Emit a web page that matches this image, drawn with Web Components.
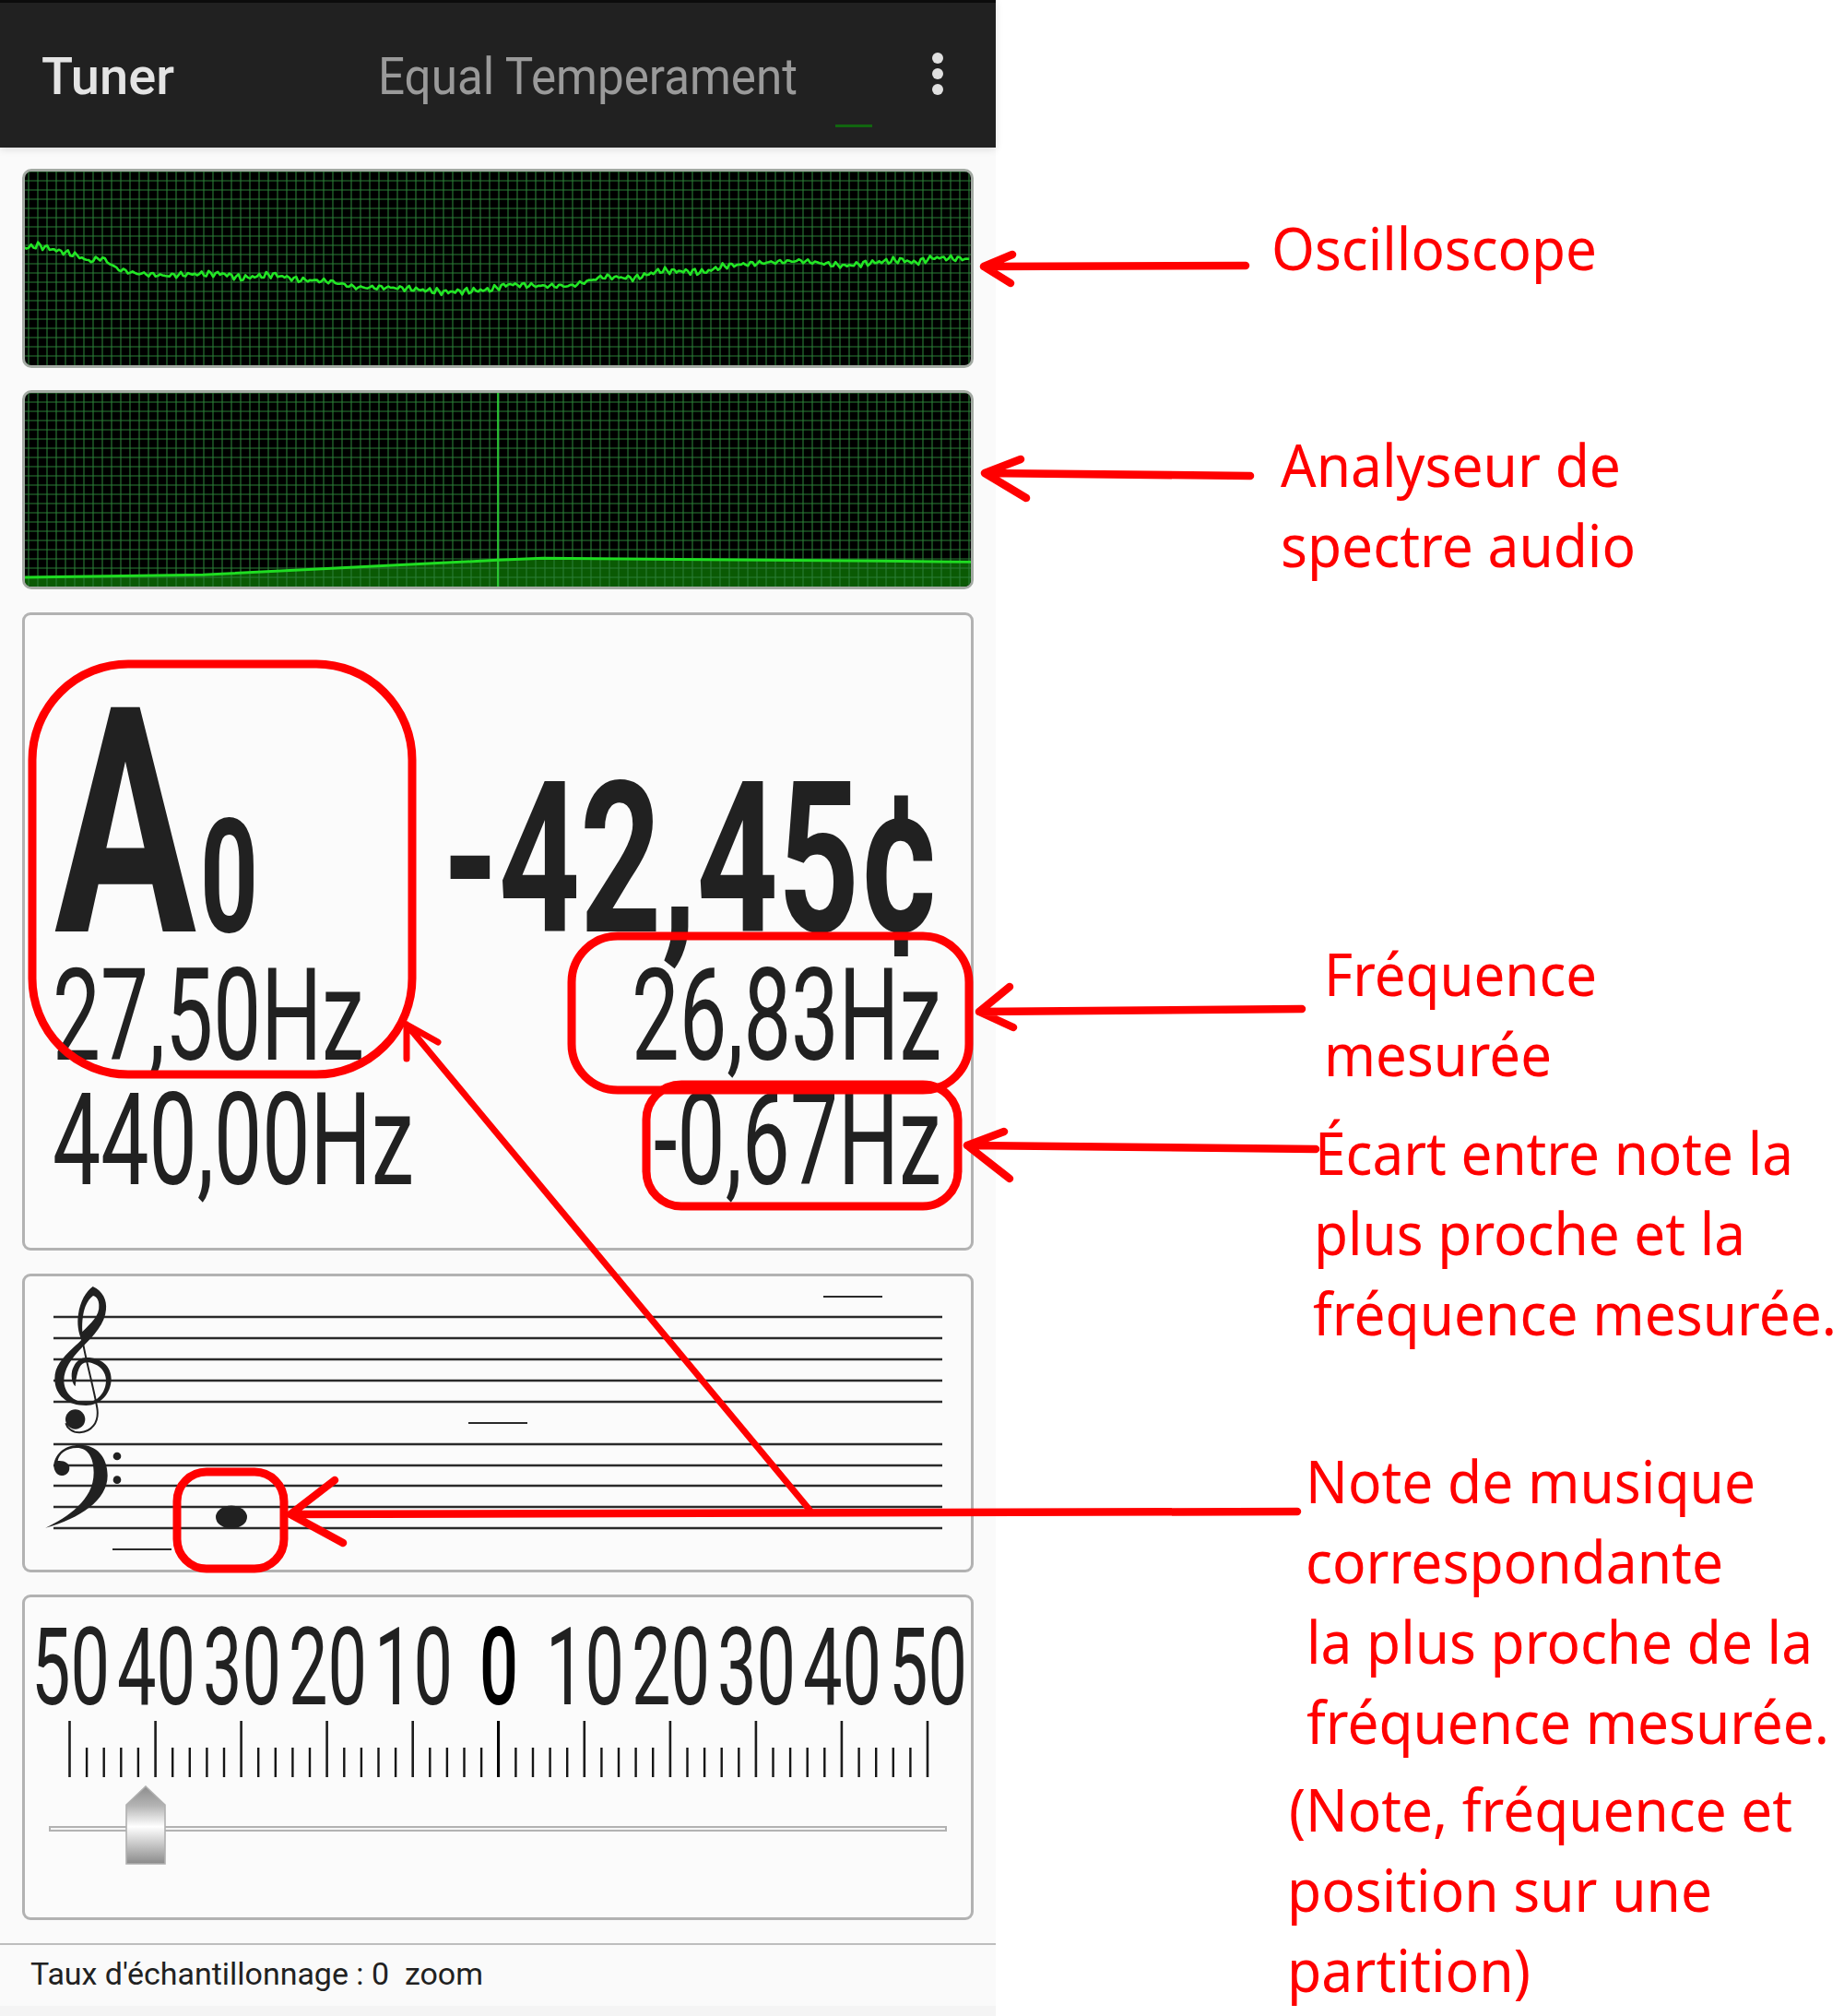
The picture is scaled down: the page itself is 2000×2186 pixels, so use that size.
<!DOCTYPE html>
<html lang="fr">
<head>
<meta charset="utf-8">
<title>Tuner</title>
<style>
  html,body{margin:0;padding:0;background:#fff}
  body{width:2000px;height:2186px;position:relative;overflow:hidden}
  #page{display:flex;align-items:flex-start}
  #notes{padding-top:225px;flex:1;min-width:0}
</style>
</head>
<body>
<div id="page">
  <tuner-app>
    <app-bar></app-bar>
    <scope-panel kind="osc"></scope-panel>
    <scope-panel kind="spec"></scope-panel>
    <note-readout></note-readout>
    <staff-panel></staff-panel>
    <cents-scale></cents-scale>
    <status-line>Taux d'échantillonnage : 0&nbsp; zoom</status-line>
  </tuner-app>
  <div id="notes">
    <red-label style="margin-left:299px"><sq-text w="353">Oscilloscope</sq-text></red-label>
    <red-label style="margin:148px 0 0 309px"><sq-text w="369">Analyseur de</sq-text></red-label>
    <red-label style="margin-left:309px"><sq-text w="385">spectre audio</sq-text></red-label>
    <red-label style="margin:378px 0 0 356px"><sq-text w="296">Fréquence</sq-text></red-label>
    <red-label style="margin-left:356px"><sq-text w="247">mesurée</sq-text></red-label>
    <red-label style="margin:20px 0 0 346px"><sq-text w="519">Écart entre note la</sq-text></red-label>
    <red-label style="margin-left:345px"><sq-text w="468">plus proche et la</sq-text></red-label>
    <red-label style="margin-left:344px"><sq-text w="568">fréquence mesurée.</sq-text></red-label>
    <red-label style="margin:95px 0 0 336px"><sq-text w="488">Note de musique</sq-text></red-label>
    <red-label style="margin-left:336px"><sq-text w="453">correspondante</sq-text></red-label>
    <red-label style="margin-left:337px"><sq-text w="549">la plus proche de la</sq-text></red-label>
    <red-label style="margin-left:337px"><sq-text w="567">fréquence mesurée.</sq-text></red-label>
    <red-label style="margin:8px 0 0 318px"><sq-text w="546">(Note, fréquence et</sq-text></red-label>
    <red-label style="margin-left:316px"><sq-text w="461">position sur une</sq-text></red-label>
    <red-label style="margin-left:316px"><sq-text w="264">partition)</sq-text></red-label>
  </div>
</div>
<red-overlay></red-overlay>

<script>
class SqText extends HTMLElement {
  constructor() {
    super();
    this.attachShadow({ mode: "open" }).innerHTML = `
      <style>:host{display:inline-block;white-space:nowrap}span{display:inline-block;transform-origin:0 0}</style>
      <span><slot></slot></span>`;
  }
  connectedCallback() {
    const w = +this.getAttribute("w");
    const s = this.shadowRoot.querySelector("span");
    const nat = s.getBoundingClientRect().width;
    s.style.transform = `scaleX(${w / nat})`;
    this.style.width = w + "px";
  }
}

const PANEL = ":host{display:block;box-sizing:border-box;width:1032px;margin-left:24px;background:#fbfbfb;border:3px solid #b2b2b2;border-radius:9px}";

class TunerApp extends HTMLElement {
  constructor() {
    super();
    this.attachShadow({ mode: "open" }).innerHTML = `
      <style>:host{display:block;width:1080px;height:2186px;background:#fafafa;font-family:Roboto,sans-serif;color:#212121}</style>
      <slot></slot>`;
  }
}

class AppBar extends HTMLElement {
  constructor() {
    super();
    this.attachShadow({ mode: "open" }).innerHTML = `
      <style>
        :host{display:flex;box-sizing:border-box;height:160px;background:#212121;border-top:3px solid #0c0c0c;font:500 56px/157px Roboto,sans-serif;color:#e4e4e4;position:relative;padding:2px 0 0 45px;box-shadow:0 2px 8px rgba(0,0,0,.12)}
        .mode{margin-left:221px;font-weight:400;color:#9a9a9a}
        .dots{display:flex;flex-direction:column;gap:5px;margin:52px 0 0 146px}
        .dots i{width:12px;height:12px;border-radius:50%;background:#e0e0e0}
        .glow{position:absolute;left:906px;top:132px;width:40px;height:3px;background:#11660f}
      </style>
      <sq-text w="144">Tuner</sq-text>
      <div class="mode"><sq-text w="455">Equal Temperament</sq-text></div>
      <div class="dots"><i></i><i></i><i></i></div>
      <div class="glow"></div>`;
  }
}

class ScopePanel extends HTMLElement {
  connectedCallback() {
    const spec = this.getAttribute("kind") === "spec";
    let grid = "";
    for (let x = 4; x < 1026; x += 10) grid += `M${x} 0V210`;
    for (let y = 0; y < 210; y += 10) grid += `M0 ${y}H1026`;
    const pts = spec ? this._spectrum() : this._wave();
    const line = pts.map((p, i) => (i ? "L" : "M") + p[0].toFixed(1) + " " + p[1].toFixed(1)).join("");
    this.attachShadow({ mode: "open" }).innerHTML = `
      <style>
        :host{display:block;box-sizing:border-box;width:1032px;height:216px;margin:${spec ? "24px" : "23px"} 0 0 24px;background:#000;border:3px solid #a3aaa3;border-radius:10px;overflow:hidden}
        svg{display:block}
      </style>
      <svg width="1026" height="210" viewBox="0 0 1026 210">
        ${spec ? `<path d="${line}L1026 210L0 210Z" fill="#0a5a04"/>` : ""}
        <path d="${grid}" stroke="#2b7e37" stroke-width="1.1" fill="none"/>
        ${spec ? `<path d="M513 0V210" stroke="#2fe03a" stroke-width="1.6"/>` : ""}
        <path d="${line}" fill="none" stroke="${spec ? "#1fdc22" : "#23e626"}" stroke-width="${spec ? 3 : 2.6}" stroke-linejoin="round"/>
      </svg>`;
  }
  _spectrum() {
    return [[38, 678], [320, 670], [784, 622], [855, 616], [1390, 625], [1530, 628]]
      .map(([x, y]) => [x / 1.452 - 27, 400 + y / 3 - 426]).map((p, i) => i ? p : [0, p[1]]);
  }
  _wave() {
    const k = [[38,808],[60,798],[90,815],[120,830],[140,850],[160,838],[185,875],[210,888],[260,897],[300,892],[350,890],[380,905],[430,893],[470,910],[520,915],[560,935],[610,935],[640,938],[700,950],[770,943],[800,925],[850,930],[900,930],[950,900],[1000,905],[1040,880],[1110,885],[1140,865],[1200,855],[1260,848],[1330,865],[1370,855],[1420,845],[1440,855],[1470,838],[1530,843]]
      .map(([x, y]) => [x / 1.452 - 27, y / 3 - 186]);
    const out = [];
    let seg = 0;
    for (let x = k[0][0]; x < 1026; x += 2.5) {
      while (seg < k.length - 2 && x > k[seg + 1][0]) seg++;
      const [a, b] = [k[seg], k[seg + 1]];
      const y = a[1] + (b[1] - a[1]) * (x - a[0]) / (b[0] - a[0]);
      const noise = Math.sin(x * 1.7) * 1.6 + Math.sin(x * 0.61 + 2) * 1.5 + Math.sin(x * 3.3 + 1) * 0.9;
      out.push([x, y + noise]);
    }
    return out;
  }
}

class NoteReadout extends HTMLElement {
  constructor() {
    super();
    this.attachShadow({ mode: "open" }).innerHTML = `
      <style>
        ${PANEL}
        :host{height:692px;margin-top:25px;padding:89px 32px 0 30px}
        .row{display:flex;justify-content:space-between;align-items:baseline;font-size:139px;line-height:137px}
        .big{font-weight:700;line-height:275px;height:277px}
        .two{height:135px}
        .a{font-size:342px;margin-left:2px}
        .o{font-size:172px;margin-left:4px}
        .c{font-size:228px}
        .l{display:flex;align-items:baseline}
      </style>
      <div class="row big">
        <div class="l"><sq-text class="a" w="154">A</sq-text><sq-text class="o" w="63">0</sq-text></div>
        <sq-text class="c" w="541">-42,45¢</sq-text>
      </div>
      <div class="row two"><sq-text w="338">27,50Hz</sq-text><sq-text w="336">26,83Hz</sq-text></div>
      <div class="row"><sq-text w="392">440,00Hz</sq-text><sq-text w="312">-0,67Hz</sq-text></div>`;
  }
}

class StaffPanel extends HTMLElement {
  constructor() {
    super();
    const ys = [1428, 1451, 1474, 1497, 1520, 1566, 1589, 1611, 1634, 1657];
    const staff = ys.map(y => `M58 ${y}H1022`).join("");
    this.attachShadow({ mode: "open" }).innerHTML = `
      <style>
        ${PANEL}
        :host{height:324px;margin-top:25px;overflow:hidden}
        svg{display:block}
      </style>
      <svg width="1026" height="318" viewBox="27 1384 1026 318">
        <path d="${staff}" stroke="#2a2a2a" stroke-width="2.6" fill="none"/>
        <path d="M893 1406H957M508 1543H572M122 1680H186" stroke="#2a2a2a" stroke-width="2.2" fill="none"/>
        <ellipse cx="251" cy="1645" rx="17" ry="12.5" fill="#212121"/>
        <g transform="translate(30 1370) scale(.3333)" fill="#212121">
          <path fill-rule="evenodd" d="M212 75C245 90 258 120 255 150C252 195 215 235 180 270C140 310 118 345 118 380C118 420 150 452 190 452C225 452 255 420 255 380C255 345 222 322 192 322C170 322 160 350 155 400C140 385 140 350 150 335C160 315 175 306 192 306C240 306 272 335 272 375C272 425 235 462 190 462C130 462 88 430 88 375C88 335 110 310 150 272C160 262 170 255 175 248C165 225 160 195 165 165C170 125 190 90 212 75ZM213 105C195 118 175 150 178 222C205 195 235 170 232 135C232 120 225 108 213 105Z"/>
          <path d="M176 235C185 300 213 395 226 470C234 520 205 548 170 550C145 551 128 535 124 520" fill="none" stroke="#212121" stroke-width="6"/>
          <circle cx="155" cy="507" r="32"/>
          <path d="M85 655C90 615 125 590 170 590C225 590 260 630 260 690C260 770 170 830 58 860C130 825 215 770 215 680C215 630 195 600 160 600C125 600 102 620 98 642C120 640 136 650 136 665C136 680 125 690 110 690C95 690 85 675 85 655Z"/>
          <circle cx="291" cy="627" r="13"/>
          <circle cx="291" cy="704" r="13"/>
        </g>
      </svg>`;
  }
}

class CentsScale extends HTMLElement {
  constructor() {
    super();
    const labels = [50, 40, 30, 20, 10, 0, 10, 20, 30, 40, 50];
    let minor = "", major = "";
    for (let i = 0; i <= 50; i++) {
      const x = (48.5 + i * 18.61).toFixed(1);
      if (i % 5 === 0) major += `M${x} 0V61`;
      else minor += `M${x} 29V61`;
    }
    this.attachShadow({ mode: "open" }).innerHTML = `
      <style>
        ${PANEL}
        :host{height:353px;margin-top:24px;padding-top:18px}
        .nums{display:grid;grid-template-columns:repeat(11,93.05px);padding-left:2.5px;font-size:117px;line-height:116px;text-align:center;color:#212121}
        .zero{color:#000;font-weight:500}
        svg{display:block}
        .slide{position:relative;height:85px;margin-top:9px}
        .track{box-sizing:border-box;height:6px;margin:44px 26px 0 26px;position:absolute;left:0;right:0;background:#f5f5f5;border:2px solid #b2b2b2}
        .thumb{position:absolute;left:109px;top:0}
      </style>
      <div class="nums">${labels.map(n => n === 0
        ? `<span class="zero"><sq-text w="42">0</sq-text></span>`
        : `<span><sq-text w="85">${n}</sq-text></span>`).join("")}</div>
      <svg width="1026" height="61" viewBox="0 0 1026 61">
        <path d="${minor}" stroke="#151515" stroke-width="2.4"/>
        <path d="${major}" stroke="#1c1c1c" stroke-width="2.6"/>
        <path d="M513.5 0V61" stroke="#000" stroke-width="3"/>
      </svg>
      <div class="slide">
        <div class="track"></div>
        <svg class="thumb" width="44" height="86" viewBox="0 0 44 86">
          <defs><linearGradient id="g" x1="0" y1="0" x2="0" y2="1">
            <stop offset="0" stop-color="#8c8c8c"/><stop offset=".25" stop-color="#b4b4b4"/>
            <stop offset=".52" stop-color="#fff"/><stop offset="1" stop-color="#8a8a8a"/>
          </linearGradient></defs>
          <path d="M22 1L43 21V85H1V21Z" fill="url(#g)" stroke="#b0b0b0" stroke-width="1.6"/>
        </svg>
      </div>`;
  }
}

class StatusLine extends HTMLElement {
  constructor() {
    super();
    this.attachShadow({ mode: "open" }).innerHTML = `
      <style>
        :host{display:block;box-sizing:border-box;height:79px;margin-top:25px;border-top:2px solid #bdbdbd;border-bottom:11px solid #f4f4f4;padding:3px 0 0 33px;font:400 34px/56px Roboto,sans-serif;color:#212121}
      </style>
      <sq-text w="491"><slot></slot></sq-text>`;
  }
}

class RedLabel extends HTMLElement {
  constructor() {
    super();
    this.attachShadow({ mode: "open" }).innerHTML = `
      <style>:host{display:block;font:400 64px/87px "Noto Sans","Open Sans",sans-serif;color:#ff0000}</style>
      <slot></slot>`;
  }
}

// hand drawn boxes and arrows of whoever annotated the screenshot
class RedOverlay extends HTMLElement {
  constructor() {
    super();
    const box = (x1, y1, x2, y2, r) => `<rect x="${x1}" y="${y1}" width="${x2 - x1}" height="${y2 - y1}" rx="${r}"/>`;
    const arrow = (x1, y1, x2, y2, ax, ay, bx, by) => `<path d="M${x1} ${y1}L${x2} ${y2}M${ax} ${ay}L${x2} ${y2}L${bx} ${by}"/>`;
    this.attachShadow({ mode: "open" }).innerHTML = `
      <style>:host{position:absolute;left:0;top:0;width:2000px;height:2186px;pointer-events:none}svg{display:block}</style>
      <svg width="2000" height="2186" fill="none" stroke="#ff0000" stroke-width="8.5" stroke-linecap="round" stroke-linejoin="round">
        <g stroke-width="9">
          ${box(35, 720, 447, 1165, 104)}
          ${box(620, 1015, 1051, 1182, 50)}
          ${box(701, 1176, 1039, 1308, 38)}
          ${box(192, 1596, 308, 1701, 32)}
        </g>
        ${arrow(1351, 288, 1067, 289, 1098, 276, 1096, 307)}
        ${arrow(1356, 516, 1068, 513, 1107, 498, 1113, 540)}
        ${arrow(1412, 1094, 1062, 1097, 1095, 1070, 1099, 1114)}
        ${arrow(1427, 1246, 1049, 1242, 1089, 1227, 1095, 1278)}
        ${arrow(1407, 1639, 315, 1642, 363, 1605, 372, 1673)}
        <g stroke-width="7">${arrow(878, 1637, 441, 1111, 475, 1130, 441, 1148)}</g>
      </svg>`;
  }
}

customElements.define("tuner-app", TunerApp);
customElements.define("app-bar", AppBar);
customElements.define("scope-panel", ScopePanel);
customElements.define("note-readout", NoteReadout);
customElements.define("staff-panel", StaffPanel);
customElements.define("cents-scale", CentsScale);
customElements.define("status-line", StatusLine);
customElements.define("red-label", RedLabel);
customElements.define("red-overlay", RedOverlay);
// last, so that every text measures with its final font
customElements.define("sq-text", SqText);
</script>
</body>
</html>
